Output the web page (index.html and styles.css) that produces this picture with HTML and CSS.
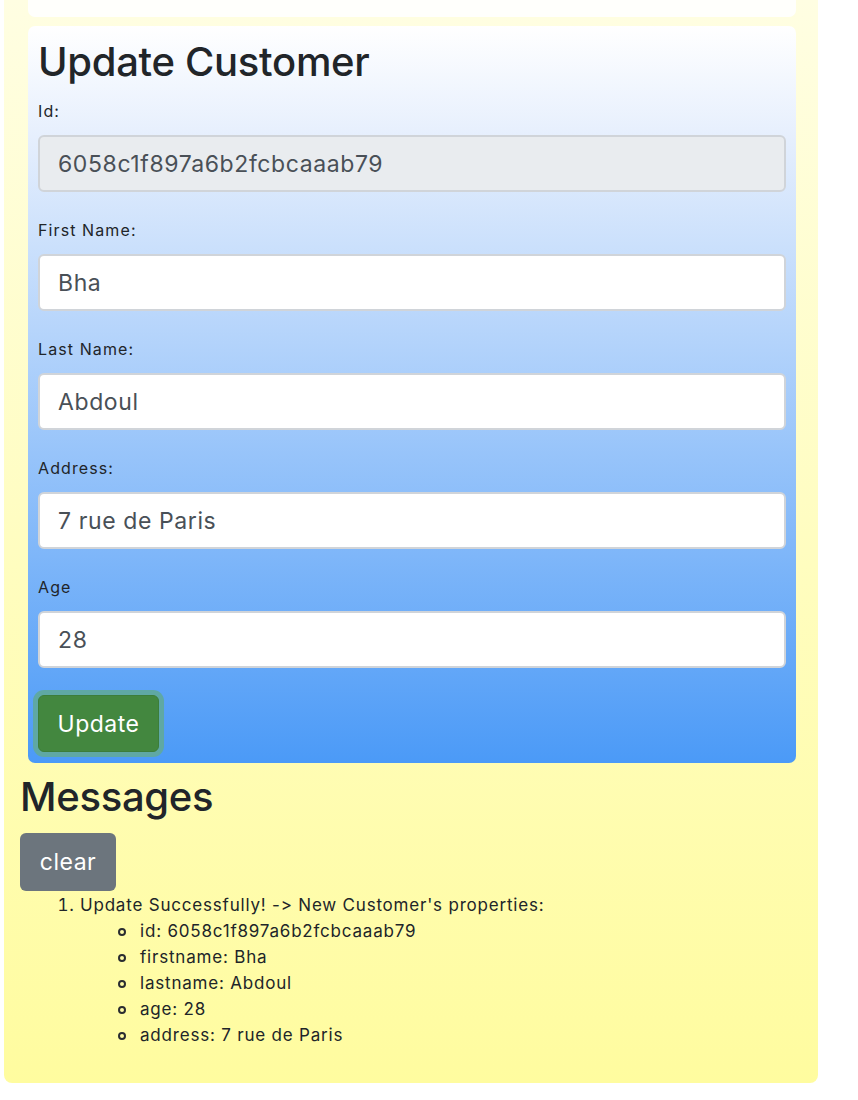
FILE: index.html
```html
<!DOCTYPE html>
<html lang="en">
<head>
<meta charset="utf-8">
<title>Update Customer</title>
<link rel="stylesheet" href="styles.css">
</head>
<body>
<div class="page">
  <div class="top-card"></div>
  <form class="update-card">
    <h1 class="title">Update Customer</h1>
    <div class="field">
      <label class="label">Id:</label>
      <input class="input input-disabled" type="text" value="6058c1f897a6b2fcbcaaab79" disabled>
    </div>
    <div class="field">
      <label class="label">First Name:</label>
      <input class="input" type="text" value="Bha">
    </div>
    <div class="field">
      <label class="label">Last Name:</label>
      <input class="input" type="text" value="Abdoul">
    </div>
    <div class="field">
      <label class="label">Address:</label>
      <input class="input" type="text" value="7 rue de Paris">
    </div>
    <div class="field">
      <label class="label">Age</label>
      <input class="input" type="text" value="28">
    </div>
    <button class="btn btn-update" type="button">Update</button>
  </form>
  <h1 class="messages-title">Messages</h1>
  <button class="btn btn-clear" type="button">clear</button>
  <ol class="messages">
    <li>Update Successfully! -&gt; New Customer's properties:
      <ul class="props">
        <li>id: 6058c1f897a6b2fcbcaaab79</li>
        <li>firstname: Bha</li>
        <li>lastname: Abdoul</li>
        <li>age: 28</li>
        <li>address: 7 rue de Paris</li>
      </ul>
    </li>
  </ol>
</div>
</body>
</html>
```
FILE: styles.css
```css
html, body {
  margin: 0;
  padding: 0;
  background: #ffffff;
}
body {
  font-family: Inter, "Liberation Sans", sans-serif;
  font-feature-settings: "calt" 0, "liga" 0;
  color: #212529;
}
.page {
  margin-left: 4px;
  width: 814px;
  height: 1083px;
  box-sizing: border-box;
  padding: 0 16px;
  background: linear-gradient(to bottom, #fffee2, #fffc9f);
  border-radius: 0 0 8px 8px;
}
.top-card {
  height: 17px;
  margin: 0 6px 0 8px;
  background: #fffffc;
  border-radius: 0 0 7px 7px;
}
.update-card {
  margin: 9px 6px 0 8px;
  padding: 10px 10px 11px;
  border-radius: 7px;
  background: linear-gradient(to bottom, #ffffff 0%, #e6effd 15%, #4b9af7 100%);
}
.title {
  margin: 0 0 12px;
  font-size: 40px;
  font-weight: 500;
  line-height: 52px;
  letter-spacing: -0.3px;
}
.field {
  margin-bottom: 27px;
}
.label {
  display: block;
  font-size: 16px;
  line-height: 22px;
  letter-spacing: 1.1px;
  margin-bottom: 13px;
}
.input {
  display: block;
  width: 100%;
  box-sizing: border-box;
  height: 57px;
  padding: 0 18px;
  border: 2px solid #d0d4d9;
  border-radius: 6px;
  background: #ffffff;
  font-family: inherit;
  font-feature-settings: "calt" 0;
  font-size: 23px;
  letter-spacing: 0.6px;
  color: #495057;
}
.input-disabled {
  background: #e9ecef;
  -webkit-text-fill-color: #495057;
  opacity: 1;
}
.btn {
  display: block;
  border: none;
  border-radius: 6px;
  font-family: inherit;
  font-size: 23px;
  letter-spacing: 0.5px;
  color: #ffffff;
  padding: 0;
}
.btn-update {
  width: 121px;
  height: 57px;
  background: #43873f;
  border: 1px solid #3c7d3a;
  box-shadow: 0 0 0 5px #5fa8a4;
}
.messages-title {
  margin: 8px 0 10px;
  font-size: 40px;
  font-weight: 500;
  line-height: 52px;
  letter-spacing: -0.3px;
}
.btn-clear {
  width: 96px;
  height: 58px;
  background: #6c757d;
}
.messages {
  margin: 1px 0 0;
  padding-left: 60px;
  font-size: 17px;
  line-height: 26px;
  letter-spacing: 0.8px;
}
.props {
  list-style: none;
  margin: 0;
  padding-left: 60px;
}
.props li {
  position: relative;
}
.props li::before {
  content: "";
  position: absolute;
  left: -22px;
  top: 10px;
  width: 4px;
  height: 4px;
  border: 2px solid #2a2d30;
  border-radius: 50%;
}
```
